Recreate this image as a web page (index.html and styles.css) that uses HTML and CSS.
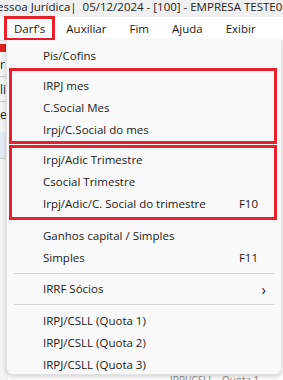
FILE: index.html
```html
<!DOCTYPE html>
<html lang="pt-br">
    <head>
        <title>Darf's</title>
        <meta charset="utf-8">
        <link rel="stylesheet" href="styles.css">
    </head>

    <body>
        <div class="titulo">essoa Jurídica|&nbsp; 05/12/2024 - [100] - EMPRESA TESTE0</div>

        <nav class="barra">
            <span class="menu ativo">Darf's</span>
            <span class="menu">Auxiliar</span>
            <span class="menu">Fim</span>
            <span class="menu">Ajuda</span>
            <span class="menu">Exibir</span>
        </nav>

        <div class="fundo">
            <div class="lateral">
                <div class="icone"></div>
                <div class="letra">r</div>
                <div class="linha"></div>
                <div class="letra">li</div>
                <div class="linha"></div>
                <div class="letra">e</div>
                <div class="faixa"></div>
                <div class="linha"></div>
            </div>
            <div class="rodape">IRPJ/CSLL - Quota 1</div>

            <div class="dropdown">
                <div class="item">Pis/Cofins</div>

                <div class="caixa primeira">
                    <div class="item">IRPJ mes</div>
                    <div class="item">C.Social Mes</div>
                    <div class="item">Irpj/C.Social do mes</div>
                </div>

                <div class="caixa segunda">
                    <div class="item">Irpj/Adic Trimestre</div>
                    <div class="item">Csocial Trimestre</div>
                    <div class="item">Irpj/Adic/C. Social do trimestre <span class="atalho">F10</span></div>
                </div>

                <div class="item espaco">Ganhos capital / Simples</div>
                <div class="item">Simples <span class="atalho">F11</span></div>
                <div class="separador"></div>
                <div class="item">IRRF Sócios <span class="seta">&#8250;</span></div>
                <div class="separador"></div>
                <div class="item espaco">IRPJ/CSLL (Quota 1)</div>
                <div class="item">IRPJ/CSLL (Quota 2)</div>
                <div class="item">IRPJ/CSLL (Quota 3)</div>
            </div>
        </div>
    </body>
</html>
```

FILE: styles.css
```css
* {
    font-family: "Open Sans", "Noto Sans", sans-serif;
    box-sizing: border-box;
}
body {
    margin: 0px;
    padding: 0px;
    width: 283px;
    height: 380px;
    overflow: hidden;
    background: #ffffff;
    color: #1a1a1a;
    font-size: 11.5px;
}
.titulo {
    height: 17px;
    line-height: 14px;
    font-size: 11.5px;
    background: #f0f0f0;
    color: #222222;
    white-space: nowrap;
    overflow: hidden;
    margin-left: -3px;
}
.barra {
    height: 23px;
    display: flex;
    align-items: center;
    background: #ffffff;
    padding-left: 4px;
}
.menu {
    padding: 0px 8px;
    line-height: 19px;
    border: 3px solid transparent;
    margin-right: 1px;
}
.menu.ativo {
    border-color: #e8212a;
    padding: 0px 7px;
    margin-right: 0px;
}
.fundo {
    position: relative;
    height: 340px;
    background: #ffffff;
}
.lateral {
    width: 8px;
    height: 340px;
    background: #f4f4f4;
    overflow: hidden;
    border-top: 1px solid #dddddd;
}
.icone {
    width: 6px;
    height: 8px;
    background: #e02020;
    margin-top: 3px;
}
.letra {
    font-size: 12px;
    line-height: 18px;
    margin: 4px 0px 2px 0px;
}
.linha {
    height: 1px;
    background: #c8c8c8;
}
.faixa {
    height: 26px;
    margin-top: 8px;
    background: #e6ecf5;
}
.rodape {
    position: absolute;
    left: 170px;
    top: 333px;
    color: #888888;
    font-size: 10px;
}
.dropdown {
    position: absolute;
    left: 6px;
    top: 0px;
    width: 276px;
    height: 335px;
    background: #f9f9f9;
    border: 1px solid #e2e2e2;
    border-top: none;
    border-radius: 0px 0px 7px 7px;
    box-shadow: 0px 2px 5px rgba(0, 0, 0, 0.18);
    padding-top: 5px;
}
.item {
    height: 22px;
    line-height: 22px;
    padding-left: 36px;
    padding-right: 23px;
    display: flex;
    justify-content: space-between;
    white-space: nowrap;
}
.caixa {
    border: 3px solid #e8212a;
    margin: 1px 4px 0px 2px;
}
.caixa .item {
    padding-left: 31px;
    padding-right: 16px;
}
.primeira {
    padding-top: 4px;
}
.segunda {
    padding-top: 1px;
    padding-bottom: 2px;
}
.espaco {
    margin-top: 5px;
}
.separador {
    height: 1px;
    background: #d6d6d6;
    margin: 4px 6px 4px 7px;
}
.seta {
    font-size: 15px;
    margin-right: -8px;
}
```
